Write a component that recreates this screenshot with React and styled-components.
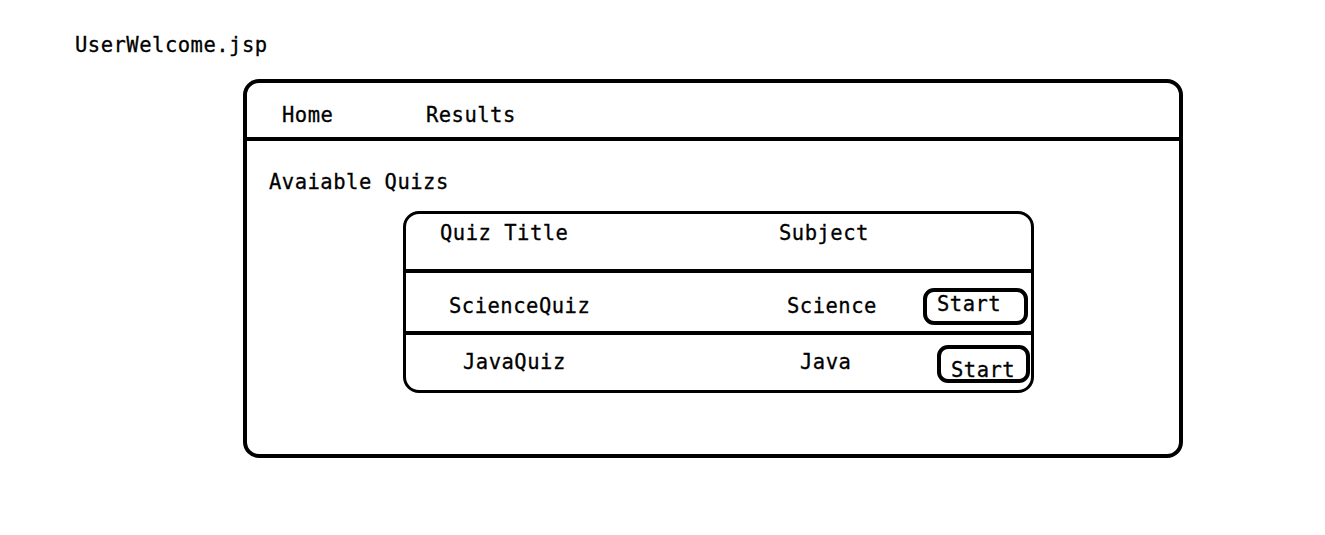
import React from "react";
import styled, { createGlobalStyle } from "styled-components";

const Global = createGlobalStyle`
  html, body { margin: 0; padding: 0; background: #ffffff; }
  body {
    font-family: "DejaVu Sans Mono", "Liberation Mono", monospace;
    font-size: 20.5px;
    letter-spacing: 0.5px;
    line-height: 24px;
    color: #000;
    -webkit-text-stroke: 0.3px #000;
  }
`;

const Page = styled.div`
  width: 1325px;
  height: 535px;
  box-sizing: border-box;
  padding: 32.5px 0 0 75px;
`;

const FileName = styled.div`
  margin: 0;
`;

const Frame = styled.div`
  margin: 22.5px 0 0 168px;
  width: 940px;
  height: 379px;
  box-sizing: border-box;
  border: 4px solid #000;
  border-radius: 16px;
  display: flex;
  flex-direction: column;
`;

const Nav = styled.nav`
  height: 58px;
  box-sizing: border-box;
  padding: 19.5px 0 0 35px;
  display: flex;
  gap: 92.5px;
  border-bottom: 4px solid #000;
`;

const NavItem = styled.span``;

const Content = styled.div`
  padding: 28.5px 0 0 22px;
`;

const Heading = styled.div``;

const Table = styled.div`
  margin: 17.5px 0 0 134px;
  width: 631px;
  height: 182px;
  box-sizing: border-box;
  border: 3px solid #000;
  border-radius: 16px;
  display: flex;
  flex-direction: column;
`;

const Row = styled.div`
  display: grid;
  grid-template-columns: 364px 145px 1fr;
  align-items: start;
  height: ${(p) => p.$h}px;
  box-sizing: border-box;
  padding-top: ${(p) => p.$pad}px;
  border-bottom: ${(p) => (p.$last ? "none" : "4px solid #000")};
`;

const Cell = styled.div`
  padding-left: ${(p) => p.$indent}px;
  white-space: nowrap;
`;

const ActionCell = styled.div`
  padding-left: ${(p) => p.$indent}px;
  margin-top: ${(p) => p.$shift}px;
`;

const StartButton = styled.div`
  width: ${(p) => p.$w}px;
  height: ${(p) => p.$hgt}px;
  box-sizing: border-box;
  border: 4px solid #000;
  border-radius: 11px;
  padding-top: ${(p) => p.$top}px;
  padding-left: 10px;
`;

const rows = [
  {
    title: "ScienceQuiz",
    subject: "Science",
    h: 62,
    pad: 20.5,
    ti: 43,
    si: 17,
    ai: 8,
    shift: -5.5,
    bw: 105,
    bh: 37,
    bt: 0,
  },
  {
    title: "JavaQuiz",
    subject: "Java",
    h: 55,
    pad: 15,
    ti: 57,
    si: 30,
    ai: 22,
    shift: -5,
    bw: 93,
    bh: 38,
    bt: 8.5,
    last: true,
  },
];

export default function App() {
  return (
    <>
      <Global />
      <Page>
        <FileName>UserWelcome.jsp</FileName>
        <Frame>
          <Nav>
            <NavItem>Home</NavItem>
            <NavItem>Results</NavItem>
          </Nav>
          <Content>
            <Heading>Avaiable Quizs</Heading>
            <Table>
              <Row $h={59} $pad={6.5}>
                <Cell $indent={34}>Quiz Title</Cell>
                <Cell $indent={9}>Subject</Cell>
                <Cell $indent={0} />
              </Row>
              {rows.map((r) => (
                <Row key={r.title} $h={r.h} $pad={r.pad} $last={r.last}>
                  <Cell $indent={r.ti}>{r.title}</Cell>
                  <Cell $indent={r.si}>{r.subject}</Cell>
                  <ActionCell $indent={r.ai} $shift={r.shift}>
                    <StartButton $w={r.bw} $hgt={r.bh} $top={r.bt}>
                      Start
                    </StartButton>
                  </ActionCell>
                </Row>
              ))}
            </Table>
          </Content>
        </Frame>
      </Page>
    </>
  );
}
